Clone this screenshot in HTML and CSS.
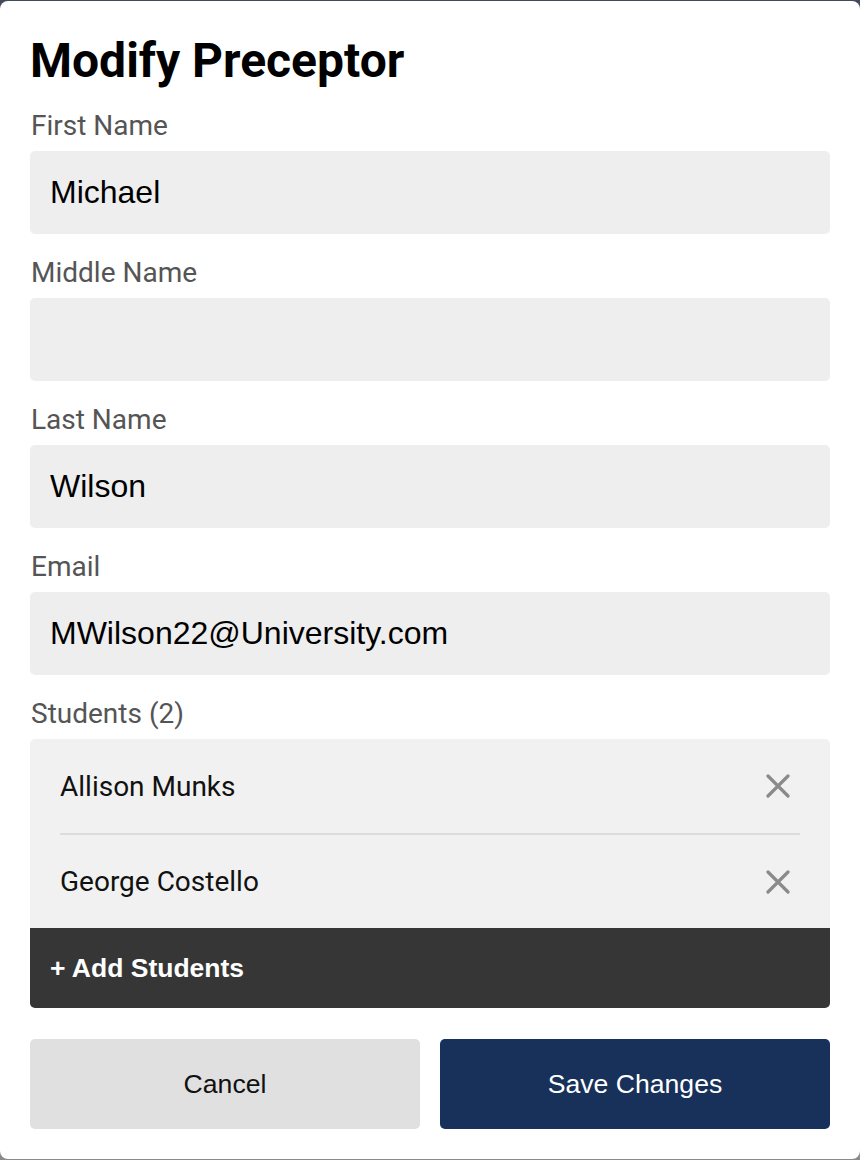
FILE: index.html
```html
<!DOCTYPE html>
<html lang="en">
<head>
<meta charset="utf-8">
<title>Modify Preceptor</title>
<link rel="stylesheet" href="styles.css">
</head>
<body>
<div class="modal">
  <h1 class="title">Modify Preceptor</h1>
  <div class="fields">
    <div class="field">
      <label class="label" for="first">First Name</label>
      <input class="input" id="first" type="text" value="Michael">
    </div>
    <div class="field">
      <label class="label" for="middle">Middle Name</label>
      <input class="input" id="middle" type="text" value="">
    </div>
    <div class="field">
      <label class="label" for="last">Last Name</label>
      <input class="input" id="last" type="text" value="Wilson">
    </div>
    <div class="field">
      <label class="label" for="email">Email</label>
      <input class="input" id="email" type="text" value="MWilson22@University.com">
    </div>
    <div class="field">
      <div class="label">Students (2)</div>
      <div class="students">
        <ul class="student-list">
          <li class="student">
            <span class="student-name">Allison Munks</span>
            <button class="remove" type="button" aria-label="Remove Allison Munks">
              <svg viewBox="0 0 24 24" width="24" height="24"><path d="M2 2 L22 22 M22 2 L2 22" stroke="#8a8a8a" stroke-width="3.2" stroke-linecap="round" fill="none"/></svg>
            </button>
          </li>
          <li class="student">
            <span class="student-name">George Costello</span>
            <button class="remove" type="button" aria-label="Remove George Costello">
              <svg viewBox="0 0 24 24" width="24" height="24"><path d="M2 2 L22 22 M22 2 L2 22" stroke="#8a8a8a" stroke-width="3.2" stroke-linecap="round" fill="none"/></svg>
            </button>
          </li>
        </ul>
        <button class="add-students" type="button">+ Add Students</button>
      </div>
    </div>
  </div>
  <div class="actions">
    <button class="btn btn-cancel" type="button">Cancel</button>
    <button class="btn btn-save" type="button">Save Changes</button>
  </div>
</div>
</body>
</html>
```

FILE: styles.css
```css
html {
  background: linear-gradient(#434a5a, #8a8a8a);
  min-height: 100%;
}
body {
  margin: 0;
  padding: 1px 0;
  font-family: Roboto, "Liberation Sans", Arial, sans-serif;
}
.modal {
  background: #ffffff;
  border-radius: 8px;
  min-height: 1158px;
  box-sizing: border-box;
  padding: 32px 30px 30px;
}
.title {
  margin: 0 0 22px;
  font-family: Roboto, sans-serif;
  font-weight: 700;
  font-size: 48px;
  line-height: 56px;
  color: #000;
}
.fields {
  display: flex;
  flex-direction: column;
  gap: 24px;
}
.field {
  display: flex;
  flex-direction: column;
  gap: 11px;
}
.label {
  font-family: Roboto, sans-serif;
  font-size: 28px;
  line-height: 29px;
  color: #555555;
  padding-left: 1px;
}
.input {
  display: block;
  width: 100%;
  box-sizing: border-box;
  height: 83px;
  border: none;
  border-radius: 5px;
  background: #eeeeee;
  padding: 0 20px;
  font-family: "Liberation Sans", Arial, sans-serif;
  font-size: 32px;
  color: #000;
  outline: none;
}
.students {
  background: #f1f1f1;
  border-radius: 5px;
  overflow: hidden;
}
.student-list {
  list-style: none;
  margin: 0;
  padding: 0 30px;
}
.student {
  display: flex;
  align-items: center;
  justify-content: space-between;
  height: 94px;
}
.student + .student {
  border-top: 2px solid #dcdcdc;
  height: 93px;
}
.student-name {
  font-family: Roboto, sans-serif;
  font-size: 28px;
  color: #111;
}
.remove {
  border: none;
  background: transparent;
  padding: 0;
  margin-right: 10px;
  width: 24px;
  height: 24px;
  display: flex;
  align-items: center;
  justify-content: center;
  cursor: pointer;
}
.add-students {
  display: block;
  width: 100%;
  height: 80px;
  border: none;
  background: #363636;
  color: #ffffff;
  text-align: left;
  padding: 0 20px;
  font-family: "Liberation Sans", Arial, sans-serif;
  font-weight: 700;
  font-size: 26.5px;
}
.actions {
  display: grid;
  grid-template-columns: 1fr 1fr;
  gap: 20px;
  margin-top: 31px;
}
.btn {
  height: 90px;
  border: none;
  border-radius: 5px;
  font-family: "Liberation Sans", Arial, sans-serif;
  font-size: 26.6px;
}
.btn-cancel {
  background: #e0e0e0;
  color: #111;
}
.btn-save {
  background: #17315a;
  color: #ffffff;
}
```
